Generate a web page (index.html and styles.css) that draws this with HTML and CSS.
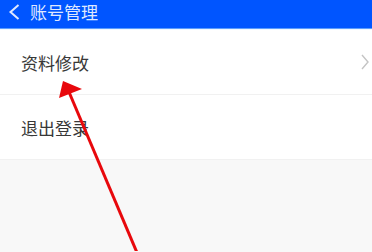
FILE: index.html
```html
<!DOCTYPE html>
<html lang="zh">
<head>
<meta charset="utf-8">
<title>账号管理</title>
<link rel="stylesheet" href="styles.css">
</head>
<body>
<div class="page">
  <header class="bar">
    <svg class="back" width="12" height="16" viewBox="0 0 12 16"><path d="M10.5 1 L2.5 8 L10.5 15" fill="none" stroke="#dfe8ff" stroke-width="2"/></svg>
    <span class="title">账号管理</span>
  </header>
  <div class="list">
    <div class="row">
      <span class="label">资料修改</span>
      <svg class="chev" width="8" height="16" viewBox="0 0 8 16"><path d="M1 1 L7 8 L1 15" fill="none" stroke="#c4c4c4" stroke-width="1.4"/></svg>
    </div>
    <div class="row">
      <span class="label">退出登录</span>
    </div>
  </div>
  <svg class="annot" width="372" height="252" viewBox="0 0 372 252">
    <line x1="138" y1="256" x2="69" y2="93" stroke="#e8080c" stroke-width="3"/>
    <polygon points="63,82 82,90 59,99" fill="#e8080c"/>
  </svg>
</div>
</body>
</html>
```
FILE: styles.css
```css
* { box-sizing: border-box; }
html, body { margin: 0; padding: 0; }
body {
  width: 372px;
  height: 252px;
  overflow: hidden;
  background: #f8f8f8;
  font-family: "Noto Sans CJK SC", "Noto Sans", sans-serif;
}
.page { position: relative; width: 372px; height: 252px; }
.bar {
  height: 30px;
  background: #0055ff;
  border-bottom: 1px solid #5a9cff;
  display: flex;
  align-items: center;
  padding-left: 8px;
  gap: 10px;
  margin-top: -1px;
}
.back { flex: none; margin-top: -3px; }
.title {
  color: #dfe8ff;
  font-size: 17px;
  line-height: 1;
  margin-top: -4px;
}
.list {
  display: flex;
  flex-direction: column;
  border-top: 1px solid #eef6ff;
}
.row {
  height: 65px;
  background: #fff;
  border-bottom: 1.5px solid #f1f1f1;
  display: flex;
  align-items: center;
  justify-content: space-between;
  padding: 0 3px 0 21px;
}
.label {
  font-size: 17px;
  color: #383838;
  line-height: 1;
}
.chev { flex: none; }
.annot { position: absolute; left: 0; top: 0; pointer-events: none; }
```
